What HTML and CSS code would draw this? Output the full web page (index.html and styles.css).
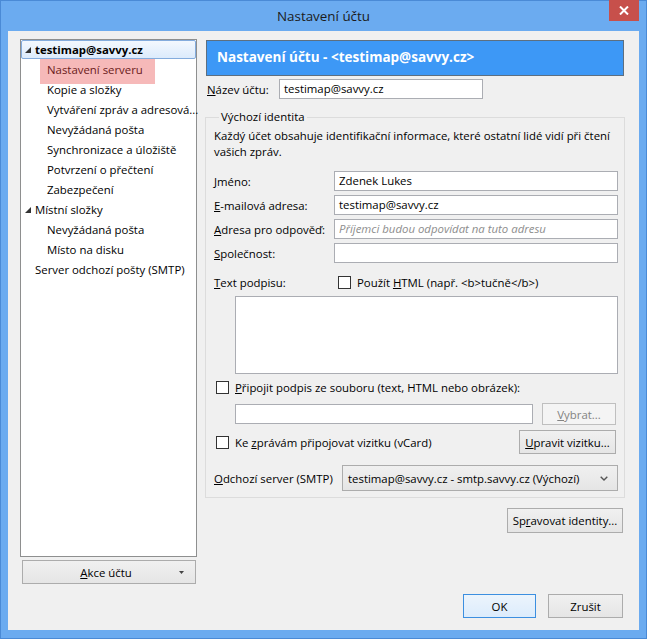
FILE: index.html
```html
<!DOCTYPE html>
<html lang="cs">
<head>
<meta charset="utf-8">
<title>Nastavení účtu</title>
<link rel="stylesheet" href="styles.css">
</head>
<body>
<div class="window">
  <div class="titlebar">
    <span></span>
    <div class="title">Nastavení účtu</div>
    <div class="close"><svg width="10" height="9" viewBox="0 0 10 9"><path d="M1 0.5 L9 8.5 M9 0.5 L1 8.5" stroke="#fff" stroke-width="2"/></svg></div>
  </div>
  <div class="client">
    <div class="sidebar">
      <div class="tree">
        <div class="row l0 sel"><svg class="tw" width="6" height="6" viewBox="0 0 6 6"><polygon points="6,0 6,6 0,6" fill="#333"/></svg><b>testimap@savvy.cz</b></div>
        <div class="row l1"><span class="mark">Nastavení serveru</span></div>
        <div class="row l1">Kopie a složky</div>
        <div class="row l1">Vytváření zpráv a adresová...</div>
        <div class="row l1">Nevyžádaná pošta</div>
        <div class="row l1">Synchronizace a úložiště</div>
        <div class="row l1">Potvrzení o přečtení</div>
        <div class="row l1">Zabezpečení</div>
        <div class="row l0"><svg class="tw" width="6" height="6" viewBox="0 0 6 6"><polygon points="6,0 6,6 0,6" fill="#333"/></svg>Místní složky</div>
        <div class="row l1">Nevyžádaná pošta</div>
        <div class="row l1">Místo na disku</div>
        <div class="row l0 noarrow">Server odchozí pošty (SMTP)</div>
      </div>
      <div class="btn menu"><span class="menu-label"><u>A</u>kce účtu</span><svg class="caret" width="5" height="3" viewBox="0 0 5 3"><polygon points="0,0 5,0 2.5,3" fill="#444"/></svg></div>
    </div>
    <div class="main">
      <div class="header">Nastavení účtu - &lt;testimap@savvy.cz&gt;</div>
      <div class="namerow">
        <span class="lbl"><u>N</u>ázev účtu:</span>
        <div class="field name">testimap@savvy.cz</div>
      </div>
      <fieldset class="group">
        <legend>Výchozí identita</legend>
        <p class="desc">Každý účet obsahuje identifikační informace, které ostatní lidé vidí při čtení<br>vašich zpráv.</p>
        <div class="grid">
          <span class="lbl"><u>J</u>méno:</span><div class="field">Zdenek Lukes</div>
          <span class="lbl"><u>E</u>-mailová adresa:</span><div class="field">testimap@savvy.cz</div>
          <span class="lbl"><u>A</u>dresa pro odpověď:</span><div class="field ph">Příjemci budou odpovídat na tuto adresu</div>
          <span class="lbl"><u>S</u>polečnost:</span><div class="field"></div>
        </div>
        <div class="sigrow">
          <span class="lbl sig-lbl"><u>T</u>ext podpisu:</span>
          <span class="check"></span>
          <span class="chk-text">Použít <u>H</u>TML (např. &lt;b&gt;tučně&lt;/b&gt;)</span>
        </div>
        <div class="textarea"></div>
        <div class="chkrow">
          <span class="check"></span>
          <span class="chk-text"><u>P</u>řipojit podpis ze souboru (text, HTML nebo obrázek):</span>
        </div>
        <div class="filerow">
          <div class="field file"></div>
          <div class="btn disabled vybrat"><u>V</u>ybrat...</div>
        </div>
        <div class="vcardrow">
          <span class="check"></span>
          <span class="chk-text">Ke <u>z</u>právám připojovat vizitku (vCard)</span>
          <div class="btn upravit"><u>U</u>pravit vizitku...</div>
        </div>
        <div class="smtprow">
          <span class="lbl"><u>O</u>dchozí server (SMTP)</span>
          <div class="select"><span>testimap@savvy.cz - smtp.savvy.cz (Výchozí)</span><svg width="8" height="5" viewBox="0 0 8 5"><path d="M0.7 0.7 L4 4 L7.3 0.7" fill="none" stroke="#555" stroke-width="1.4"/></svg></div>
        </div>
      </fieldset>
      <div class="manage"><div class="btn spravovat">Sp<u>r</u>avovat identity...</div></div>
      <div class="footer">
        <div class="btn ok">OK</div>
        <div class="btn cancel">Zrušit</div>
      </div>
    </div>
  </div>
</div>
</body>
</html>
```

FILE: styles.css
```css
* { box-sizing: border-box; }
html, body { margin: 0; padding: 0; }
body {
  width: 647px;
  height: 639px;
  overflow: hidden;
  font-family: "Open Sans", "Noto Sans", sans-serif;
  font-size: 11.4px;
  color: #000;
}
u { text-decoration: underline; text-underline-offset: 1px; }

.window {
  width: 647px;
  height: 639px;
  background: #6babf0;
  border: 1px solid #4a8ad6;
  padding: 0 7px 8px;
  display: flex;
  flex-direction: column;
}
.titlebar {
  height: 30px;
  flex: none;
  display: grid;
  grid-template-columns: 1fr auto 1fr;
  align-items: start;
}
.title {
  font-size: 13.4px;
  line-height: 30px;
  color: #1b1b1b;
}
.close {
  justify-self: end;
  width: 30px;
  height: 21px;
  margin-top: -1px;
  background: #c7504b;
  display: flex;
  align-items: center;
  justify-content: center;
}

.client {
  flex: 1;
  background: #f0f0f0;
  display: flex;
  gap: 8px;
  padding: 8px 14px 12px 12px;
}

/* sidebar */
.sidebar { width: 177px; flex: none; display: flex; flex-direction: column; }
.tree {
  height: 518px;
  background: #fff;
  border: 1px solid #8e8f8f;
  padding: 0;
}
.row {
  height: 20px;
  line-height: 20px;
  white-space: nowrap;
  display: flex;
  align-items: center;
}
.row.l0 { padding-left: 4px; }
.row.l0.noarrow { padding-left: 14px; }
.row.l1 { padding-left: 26px; }
.tw { margin-right: 4px; flex: none; }
.row.sel {
  height: 19px;
  margin-bottom: 1px;
  background: linear-gradient(#f3f8fe, #dcebfc);
  border: 1px solid #84acdd;
  border-radius: 2px;
  padding-left: 3px;
}
.row.sel b { font-weight: 700; }
.mark {
  display: inline-block;
  width: 115px;
  height: 25px;
  line-height: 22px;
  margin: -1px 0 -4px -7px;
  padding-left: 7px;
  background: #f6b9b9;
  color: #6a1a1a;
}

.btn {
  display: flex;
  align-items: center;
  justify-content: center;
  background: linear-gradient(#f0f0f0, #e5e5e5);
  border: 1px solid #acacac;
  white-space: nowrap;
}
.menu {
  margin: 3px 0 0 2px;
  width: 174px;
  height: 24px;
  justify-content: flex-start;
  padding-left: 0;
}
.menu-label { flex: 1; text-align: center; padding-left: 10px; }
.caret { margin: 0 11px 0 0; }

/* main */
.main {
  flex: 1;
  display: flex;
  flex-direction: column;
  padding-top: 1px;
}
.header {
  margin: 0 1px;
  height: 36px;
  background: #3d98f6;
  border: 1px solid #5d6f80;
  color: #fff;
  font-weight: 700;
  font-size: 13.5px;
  line-height: 33px;
  padding-left: 10px;
}
.namerow {
  margin-top: 3px;
  height: 20px;
  display: flex;
  align-items: center;
  padding-left: 2px;
}
.namerow .lbl { width: 72px; }
.field {
  height: 20px;
  background: #fff;
  border: 1px solid #abadb3;
  line-height: 18px;
  padding-left: 4px;
  white-space: nowrap;
  overflow: hidden;
}
.field.name { width: 204px; }
.field.ph { color: #8d8d8d; font-style: italic; }

.group {
  margin: 10px 0 0 0;
  padding: 3px 6px 6px 8px;
  border: 1px solid #dcdcdc;
  min-width: 0;
}
.group legend {
  padding: 0 2px;
  margin-left: 5px;
  line-height: 16px;
}
.desc { margin: 0; line-height: 16px; }
.grid {
  margin-top: 11px;
  display: grid;
  grid-template-columns: 120px 1fr;
  grid-auto-rows: 20px;
  row-gap: 4px;
  align-items: center;
}
.check {
  width: 13px;
  height: 13px;
  border: 1px solid #333;
  background: #fff;
  flex: none;
}
.chk-text { margin-left: 6px; white-space: nowrap; }
.sigrow {
  margin-top: 10px;
  height: 18px;
  display: flex;
  align-items: center;
}
.sig-lbl { width: 124px; }
.textarea {
  margin: 5px 0 0 21px;
  height: 78px;
  background: #fff;
  border: 1px solid #abadb3;
}
.chkrow {
  margin-top: 3px;
  height: 20px;
  display: flex;
  align-items: center;
  padding-left: 2px;
}
.filerow {
  margin-top: 6px;
  height: 22px;
  display: flex;
  align-items: center;
  padding-left: 21px;
}
.field.file { width: 298px; }
.vybrat {
  margin-left: auto;
  margin-right: 2px;
  width: 74px;
  height: 22px;
}
.btn.disabled {
  background: #f4f4f4;
  border-color: #bfbfbf;
  color: #838383;
}
.vcardrow {
  margin-top: 5px;
  height: 24px;
  display: flex;
  align-items: center;
  padding-left: 2px;
}
.upravit {
  margin-left: auto;
  margin-right: 2px;
  width: 97px;
  height: 24px;
}
.smtprow {
  margin-top: 11px;
  height: 26px;
  display: flex;
  align-items: center;
}
.select {
  margin-left: auto;
  width: 276px;
  height: 26px;
  background: linear-gradient(#f0f0f0, #e5e5e5);
  border: 1px solid #acacac;
  display: flex;
  align-items: center;
  justify-content: space-between;
  padding: 0 9px 0 5px;
  white-space: nowrap;
}
.manage {
  margin-top: 10px;
  display: flex;
  justify-content: flex-end;
  padding-right: 2px;
}
.spravovat { width: 116px; height: 25px; }
.footer {
  margin-top: auto;
  display: flex;
  justify-content: flex-end;
  gap: 12px;
  padding-right: 2px;
}
.ok {
  width: 73px;
  height: 24px;
  border-color: #3c8fe0;
  background: linear-gradient(#ecf4fc, #dcecfc);
}
.cancel { width: 75px; height: 24px; }
```
